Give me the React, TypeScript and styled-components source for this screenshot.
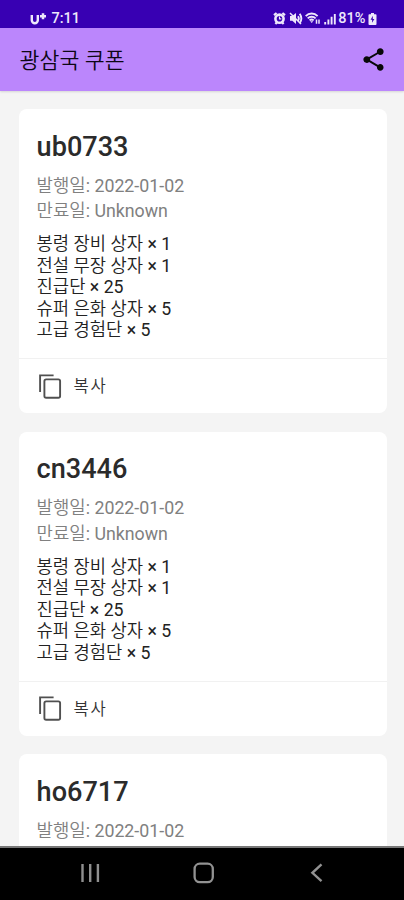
import React from 'react';
import styled, { createGlobalStyle } from 'styled-components';

const fontStack = 'Roboto, "Noto Sans CJK KR DemiLight", "Noto Sans CJK KR Light", "Noto Sans CJK KR", sans-serif';

const GlobalStyle = createGlobalStyle`
  * { box-sizing: border-box; }
  body { margin: 0; overflow: hidden; font-family: ${fontStack}; }
`;

const Screen = styled.div`
  display: flex;
  flex-direction: column;
  width: 404px;
  height: 900px;
  overflow: hidden;
  background: #f4f4f4;
`;

const StatusBar = styled.div`
  flex: none;
  display: flex;
  align-items: center;
  justify-content: space-between;
  height: 28px;
  padding: 9px 27px 0 30px;
  background: #3800b3;
  color: #eee8fb;
  font-size: 14.5px;
  font-weight: 500;
  line-height: 19px;
`;

const StatusGroup = styled.div<{ $gap: number }>`
  display: flex;
  align-items: center;
  gap: ${(p) => p.$gap}px;
  svg { flex: none; display: block; }
`;

const Percent = styled.span`
  font-size: 14.5px;
`;

const AppBar = styled.header`
  flex: none;
  display: flex;
  align-items: center;
  justify-content: space-between;
  height: 63px;
  padding: 0 17px 0 19.5px;
  background: #bb86fc;
  color: #0d0615;
  box-shadow: 0 1px 2px rgba(0, 0, 0, 0.12);
  svg { display: block; }
`;

const Heading = styled.h1`
  margin: 2px 0 0;
  font-size: 21.7px;
  font-weight: 400;
  line-height: 30px;
`;

const CouponList = styled.main`
  flex: 1;
  min-height: 0;
  overflow: hidden;
  display: flex;
  flex-direction: column;
  gap: 18.5px;
  padding: 18.4px 17.5px 0 18.6px;
`;

const Card = styled.article`
  flex: none;
  height: 304px;
  display: flex;
  flex-direction: column;
  border-radius: 8px;
  background: #fff;
`;

const CardBody = styled.div`
  flex: 1;
  padding: 20.4px 18px 0;
`;

const Code = styled.h2`
  margin: 0 0 9px;
  color: #2b2b2b;
  font-size: 27.1px;
  font-weight: 500;
  line-height: 34px;
`;

const Dates = styled.div`
  color: #808080;
  font-size: 17.8px;
  line-height: 25.6px;
`;

const Rewards = styled.div`
  margin-top: 10.4px;
  color: #222;
  font-size: 17.7px;
  line-height: 21.5px;
`;

const CopyButton = styled.button`
  flex: none;
  display: flex;
  align-items: center;
  gap: 10.5px;
  height: 55.4px;
  padding: 1px 18.5px 0;
  border: 0;
  border-top: 1px solid #f1f1f1;
  background: transparent;
  color: #333;
  font: 400 16.6px/24px ${fontStack};
  letter-spacing: 1.7px;
`;

const CopyLabel = styled.span`
  padding-top: 1.5px;
`;

const NavBar = styled.nav`
  flex: none;
  display: flex;
  align-items: center;
  justify-content: space-between;
  height: 54px;
  padding: 0 75px 3px 78px;
  border-top: 2px solid #777;
  background: #000;
`;

const CarrierIcon = () => (
  <svg width="17" height="14" viewBox="0 0 17 14" fill="none" stroke="currentColor">
    <path d="M1.8 3v5.2a3 3 0 0 0 6 0V3" strokeWidth="2.4" />
    <path d="M13 1.2v6M10 4.2h6" strokeWidth="2.5" />
  </svg>
);

const AlarmIcon = () => (
  <svg width="13" height="13" viewBox="0 0 13 13" fill="none" stroke="currentColor">
    <path d="M1 3.2 3.6 1M12 3.2 9.4 1M2.4 12l1.4-1.6M10.6 12l-1.4-1.6" strokeWidth="2.2" />
    <circle cx="6.5" cy="6.7" r="4.1" strokeWidth="2.6" />
    <path d="M6.5 4.6v2.3h1.8" strokeWidth="1.1" />
  </svg>
);

const MuteIcon = () => (
  <svg width="14" height="13" viewBox="0 0 14 13" fill="none" stroke="currentColor">
    <path d="M1 4h2.3L7 1v11L3.3 8.8H1z" fill="currentColor" stroke="none" />
    <path d="M1 1l11 11" strokeWidth="1.5" />
    <path d="M9 4.2c1 1.4 1 3.2 0 4.6M10.7 1.8c1.9 2.7 1.9 6.7 0 9.4" strokeWidth="1.9" />
  </svg>
);

const WifiIcon = () => (
  <svg width="16" height="13" viewBox="0 0 16 13" fill="none" stroke="currentColor">
    <path d="M.7 4.1C4 .7 9.3.7 12.6 4.1M2.7 6.4c2.2-2.2 5.7-2.2 7.9 0M4.6 8.4c1.1-1 3-1 4.1 0" strokeWidth="1.9" />
    <path d="M5.2 9.2h3L6.7 11z" fill="currentColor" stroke="none" />
    <path d="M11.5 7.5v4.3M14 7.5v4.3" strokeWidth="1.5" />
  </svg>
);

const SignalIcon = () => (
  <svg width="12" height="12" viewBox="0 0 12 12" fill="none" stroke="currentColor" strokeWidth="1.9">
    <path d="M1.2 9v2.5M4.4 6.5v5M7.6 3.8v7.7M10.8 1v10.5" />
  </svg>
);

const BatteryIcon = () => (
  <svg width="9" height="12" viewBox="0 0 9 12">
    <path d="M3 0h3v1.2h1.6q.9 0 .9.9v9q0 .9-.9.9H1.4q-.9 0-.9-.9v-9q0-.9.9-.9H3z" fill="currentColor" />
    <path d="M4.8 2.8 2.6 6.8h1.6l-.2 3L6.4 6H4.8z" fill="#3800b3" />
  </svg>
);

const ShareIcon = () => (
  <svg width="27" height="27" viewBox="0 0 24 24" fill="#080808">
    <path d="M18 16.08c-.76 0-1.44.3-1.96.77L8.91 12.7c.05-.23.09-.46.09-.7s-.04-.47-.09-.7l7.05-4.11c.54.5 1.25.81 2.04.81 1.66 0 3-1.34 3-3s-1.34-3-3-3-3 1.34-3 3c0 .24.04.47.09.7L8.04 9.81C7.5 9.31 6.79 9 6 9c-1.66 0-3 1.34-3 3s1.34 3 3 3c.79 0 1.5-.31 2.04-.81l7.12 4.16c-.05.21-.08.43-.08.65 0 1.61 1.31 2.92 2.92 2.92s2.92-1.31 2.92-2.92-1.31-2.92-2.92-2.92z" />
  </svg>
);

const CopyIcon = () => (
  <svg width="26" height="28" viewBox="0 0 26 28" fill="none" stroke="#505050" strokeWidth="1.9">
    <path d="M16.6 2.4H3.1v16.6" />
    <rect x="7.4" y="6.4" width="15.7" height="18.4" rx="1.8" />
  </svg>
);

const RecentsIcon = () => (
  <svg width="25" height="24" viewBox="0 0 25 24" stroke="#8f8f8f" strokeWidth="2.4">
    <path d="M4.5 3v18M12.2 3v18M19.9 3v18" />
  </svg>
);

const HomeIcon = () => (
  <svg width="24" height="24" viewBox="0 0 24 24" fill="none" stroke="#929292" strokeWidth="2.3">
    <rect x="2.6" y="2.7" width="18.2" height="18.4" rx="5.2" />
  </svg>
);

const BackIcon = () => (
  <svg width="24" height="24" viewBox="0 0 24 24" fill="none" stroke="#929292" strokeWidth="2.4">
    <path d="M16.5 3.4 7.4 11.8l9.1 8.4" />
  </svg>
);

const rewards = ['봉령 장비 상자 × 1', '전설 무장 상자 × 1', '진급단 × 25', '슈퍼 은화 상자 × 5', '고급 경험단 × 5'];

const coupons = ['ub0733', 'cn3446', 'ho6717'].map((code) => ({
  code,
  issued: '2022-01-02',
  expires: 'Unknown',
  rewards,
}));

export default function App() {
  return (
    <>
      <GlobalStyle />
      <Screen>
        <StatusBar>
          <StatusGroup $gap={4.5}>
            <CarrierIcon />
            <span>7:11</span>
          </StatusGroup>
          <StatusGroup $gap={2.5}>
            <AlarmIcon />
            <MuteIcon />
            <WifiIcon />
            <SignalIcon />
            <Percent>81%</Percent>
            <BatteryIcon />
          </StatusGroup>
        </StatusBar>
        <AppBar>
          <Heading>광삼국 쿠폰</Heading>
          <ShareIcon />
        </AppBar>
        <CouponList>
          {coupons.map((c) => (
            <Card key={c.code}>
              <CardBody>
                <Code>{c.code}</Code>
                <Dates>
                  <div>발행일: {c.issued}</div>
                  <div>만료일: {c.expires}</div>
                </Dates>
                <Rewards>
                  {c.rewards.map((r) => (
                    <div key={r}>{r}</div>
                  ))}
                </Rewards>
              </CardBody>
              <CopyButton>
                <CopyIcon />
                <CopyLabel>복사</CopyLabel>
              </CopyButton>
            </Card>
          ))}
        </CouponList>
        <NavBar>
          <RecentsIcon />
          <HomeIcon />
          <BackIcon />
        </NavBar>
      </Screen>
    </>
  );
}
